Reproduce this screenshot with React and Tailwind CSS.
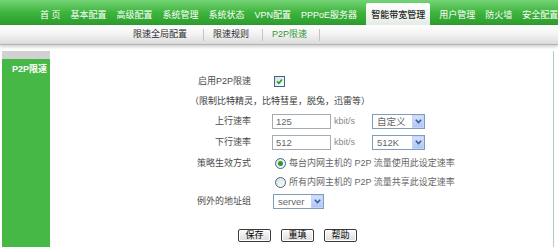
import React, { Fragment } from 'react';

const MENU = ['首 页', '基本配置', '高级配置', '系统管理', '系统状态', 'VPN配置', 'PPPoE服务器'];
const MENU_RIGHT = ['用户管理', '防火墙', '安全配置'];

const Chevron = () => (
    <svg width="7" height="5" viewBox="0 0 7 5">
        <path d="M0.8 0.8 L3.5 3.6 L6.2 0.8" stroke="#3b5a94" strokeWidth="1.5" fill="none" />
    </svg>
);

const Select = ({ value, width }) => (
    <div className={`${width} h-[15px] border border-[#7f9db9] bg-white flex items-center`}>
        <span className="flex-1 pl-[4px] text-[9.5px] text-[#666] leading-none">{value}</span>
        <span className="w-[12px] h-[13px] bg-linear-to-b from-[#d3e0fd] to-[#b1c6f6] border border-[#c3d3fb] flex items-center justify-center">
            <Chevron />
        </span>
    </div>
);

const Input = ({ value }) => (
    <div className="w-[59px] h-[15px] border border-[#a5acb2] bg-white flex items-center pl-[3px] text-[9.5px] text-[#666] leading-none">
        {value}
    </div>
);

const Radio = ({ checked }) => (
    <span className="w-[11px] h-[11px] rounded-full border border-[#3a6896] bg-linear-to-br from-[#dcdcd7] to-white flex items-center justify-center">
        {checked && <span className="w-[5px] h-[5px] rounded-full bg-[#2c9a2c]" />}
    </span>
);

const Row = ({ label, h, children }) => (
    <div className={`flex items-center ${h}`}>
        <div className="w-[201px] text-right whitespace-nowrap text-[#4a4a4a]">{label}</div>
        <div className="ml-[21px] flex items-center">{children}</div>
    </div>
);

const Btn = ({ children }) => (
    <div className="w-[33px] h-[13px] border border-[#3a3a3a] rounded-[2px] bg-linear-to-b from-[#fbfbfb] to-[#dcdcdc] shadow-[inset_0_0_0_1px_#ffffff] flex items-center justify-center text-[9px] text-black leading-none">
        {children}
    </div>
);

export default function App() {
    return (
        <div className='w-[558px] h-[251px] bg-white overflow-hidden font-["Liberation_Sans","Noto_Sans_CJK_SC",sans-serif] text-[9px] leading-none'>
            {/* Top menu */}
            <div className="h-[25px] flex items-end pl-[35px] whitespace-nowrap bg-linear-to-b from-[#74d474] via-[#3db53d] to-[#2d9b2d]">
                {MENU.map((m) => (
                    <Fragment key={m}>
                        <div className="h-[22px] px-[5px] pt-[2px] flex items-center text-white">{m}</div>
                        <div className="w-px h-[15px] mb-[4px] bg-[#93dc93]" />
                    </Fragment>
                ))}
                <div className="h-[22px] mx-[4px] px-[5px] pt-[2px] flex items-center rounded-t-[2px] bg-linear-to-b from-white to-[#e4ece4] text-[#1e1e1e] font-medium">
                    智能带宽管理
                </div>
                {MENU_RIGHT.map((m, i) => (
                    <Fragment key={m}>
                        {i > 0 && <div className="w-px h-[15px] mb-[4px] bg-[#93dc93]" />}
                        <div className="h-[22px] px-[5px] pt-[2px] flex items-center text-white">{m}</div>
                    </Fragment>
                ))}
            </div>

            {/* Sub menu */}
            <div className="h-[20px] flex items-center pl-[133px] whitespace-nowrap bg-linear-to-b from-white via-[#f2f2f2] to-[#dbdbdb] border-b border-[#b3b3b3] shadow-[0_2px_3px_rgba(0,0,0,0.18)]">
                <span className="text-[#2a2a2a]">限速全局配置</span>
                <span className="ml-[16px] w-px h-[12px] bg-[#c4c4c4]" />
                <span className="ml-[9px] text-[#2a2a2a]">限速规则</span>
                <span className="ml-[13px] w-px h-[12px] bg-[#c4c4c4]" />
                <span className="ml-[9px] text-[#2f9a2f]">P2P限速</span>
                <span className="ml-[12px] w-px h-[12px] bg-[#c4c4c4]" />
            </div>

            {/* Body */}
            <div className="mt-[6px] ml-[2px] w-[552px] h-[196px] flex">
                <div className="w-[48px] flex flex-col">
                    <div className="h-[8px] bg-[#d1d1d1]" />
                    <div className="flex-1 bg-[#45b845] pl-[10px] pt-[6px] text-white font-bold">P2P限速</div>
                </div>

                <div className="flex-1 border-r border-[#a8cece] pt-[20px] flex flex-col">
                    <Row label="启用P2P限速" h="h-[20px]">
                        <span className="ml-[2px] w-[11px] h-[11px] border border-[#3a6896] bg-linear-to-br from-[#dcdcd7] to-white flex items-center justify-center">
                            <svg width="7" height="7" viewBox="0 0 7 7">
                                <path d="M1 3.4 L2.9 5.3 L6 1.5" stroke="#22a022" strokeWidth="1.6" fill="none" />
                            </svg>
                        </span>
                    </Row>
                    <div className="h-[20px] flex items-center pl-[140px] text-[#3a3a3a] whitespace-nowrap">
                        （限制比特精灵，比特彗星，脱兔，迅雷等）
                    </div>
                    <Row label="上行速率" h="h-[21px]">
                        <Input value="125" />
                        <span className="ml-[3px] w-[38px] text-[#8a8a8a]">kbit/s</span>
                        <Select value="自定义" width="w-[53px]" />
                    </Row>
                    <Row label="下行速率" h="h-[21px]">
                        <Input value="512" />
                        <span className="ml-[3px] w-[38px] text-[#8a8a8a]">kbit/s</span>
                        <Select value="512K" width="w-[53px]" />
                    </Row>
                    <Row label="策略生效方式" h="h-[20px]">
                        <span className="ml-[3px]"><Radio checked /></span>
                        <span className="ml-[3px] text-[#666] whitespace-nowrap">每台内网主机的 P2P 流量使用此设定速率</span>
                    </Row>
                    <Row label="" h="h-[19px]">
                        <span className="ml-[3px]"><Radio /></span>
                        <span className="ml-[3px] text-[#666] whitespace-nowrap">所有内网主机的 P2P 流量共享此设定速率</span>
                    </Row>
                    <Row label="例外的地址组" h="h-[19px]">
                        <span className="ml-[1px]"><Select value="server" width="w-[51px]" /></span>
                    </Row>
                    <div className="mt-[18px] pl-[188px] flex gap-[10px]">
                        <Btn>保存</Btn>
                        <Btn>重填</Btn>
                        <Btn>帮助</Btn>
                    </div>
                </div>
            </div>
        </div>
    );
}
